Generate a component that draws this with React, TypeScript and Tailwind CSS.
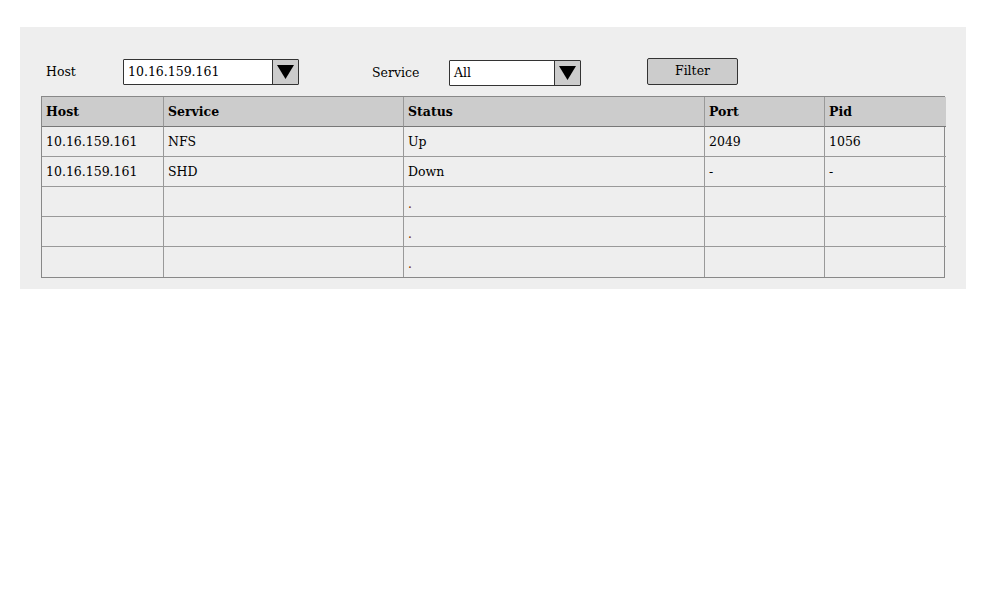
import React from "react";

const rows = [
  ["10.16.159.161", "NFS", "Up", "2049", "1056"],
  ["10.16.159.161", "SHD", "Down", "-", "-"],
  ["", "", ".", "", ""],
  ["", "", ".", "", ""],
  ["", "", ".", "", ""],
];

const headers = ["Host", "Service", "Status", "Port", "Pid"];

function Select({ value, width }: { value: string; width: string }) {
  return (
    <div className={`flex h-[26px] ${width} border border-[#333] bg-white rounded-[1px]`}>
      <span className="flex-1 pl-[4px] leading-[24px] text-[12.5px]">{value}</span>
      <div className="w-[26px] border-l border-[#333] bg-[#cccccc] flex items-center justify-center">
        <svg width="17" height="14" viewBox="0 0 17 14">
          <path d="M0 0 H17 L8.5 14 Z" fill="#000" />
        </svg>
      </div>
    </div>
  );
}

export default function App() {
  return (
    <div className="w-[997px] h-[605px] bg-white pt-[27px] pl-[20px] font-['DejaVu_Serif',serif] text-black">
      <div className="w-[946px] h-[262px] bg-[#eeeeee] px-[21px] pt-[31px]">
        {/* filter controls */}
        <div className="flex items-center h-[27px] text-[12.5px]">
          <span className="ml-[5px] w-[77px] mt-[2px]">Host</span>
          <Select value="10.16.159.161" width="w-[176px]" />
          <span className="ml-[73px] w-[77px] mt-[4px]">Service</span>
          <div className="mt-[2px]">
            <Select value="All" width="w-[132px]" />
          </div>
          <button className="ml-[66px] w-[91px] h-[27px] -mt-[1px] pt-[1px] bg-[#cccccc] border border-[#333] rounded-[2px] text-[12.5px]">
            Filter
          </button>
        </div>

        {/* table */}
        <div className="mt-[11px] grid grid-cols-[121px_240px_301px_120px_122px] border border-[#888] text-[12.5px]">
          {headers.map((h, i) => (
            <div
              key={h}
              className={`h-[30px] bg-[#cccccc] font-bold pl-[4px] leading-[30px] border-b border-[#777] ${i > 0 ? "border-l border-l-[#999]" : ""}`}
            >
              {h}
            </div>
          ))}
          {rows.map((r, ri) =>
            r.map((c, ci) => (
              <div
                key={`${ri}-${ci}`}
                className={`h-[30px] pl-[4px] leading-[30px] ${ri < rows.length - 1 ? "border-b border-[#999]" : ""} ${ci > 0 ? "border-l border-l-[#999]" : ""} ${c === "." ? "text-[#7a2a00] pt-[2px]" : ""}`}
              >
                {c}
              </div>
            ))
          )}
        </div>
      </div>
    </div>
  );
}
